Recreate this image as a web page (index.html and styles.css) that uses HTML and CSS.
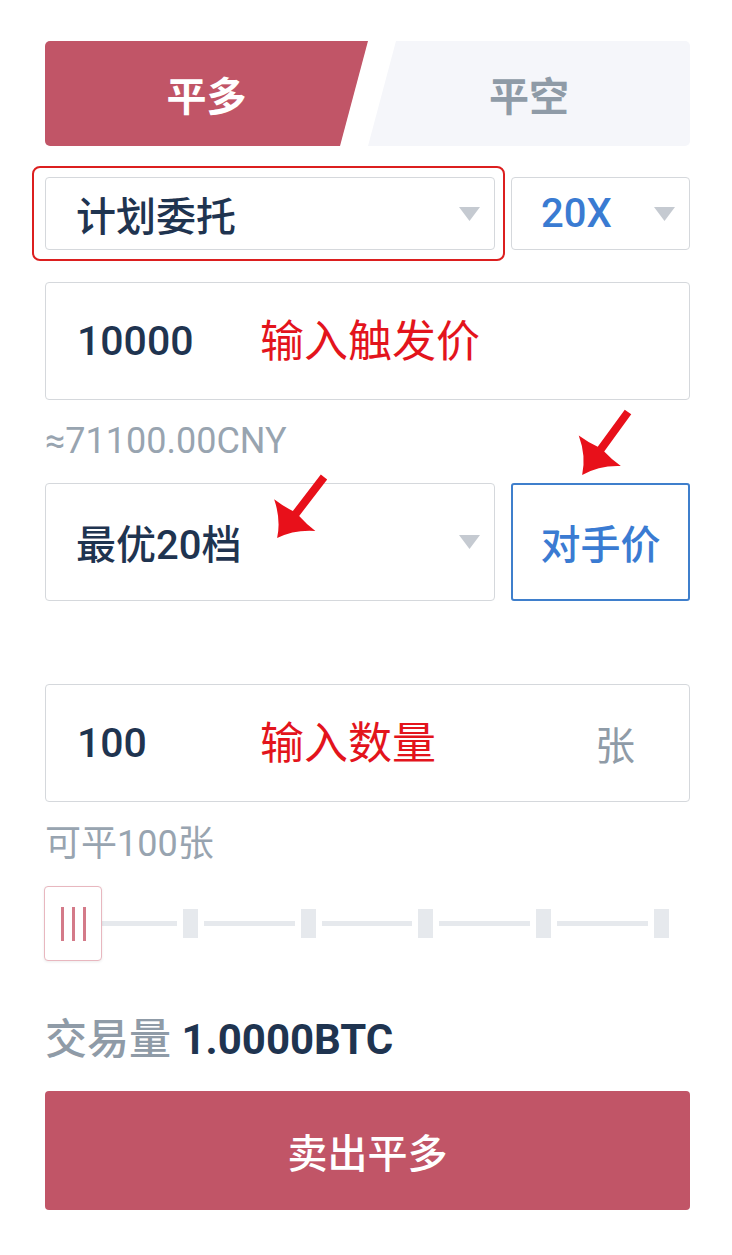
FILE: index.html
```html
<!DOCTYPE html>
<html lang="zh-CN">

<head>
    <meta charset="UTF-8">
    <meta name="viewport" content="width=device-width, initial-scale=1.0">
    <title>平多 - 计划委托</title>
    <link rel="stylesheet" href="styles.css">
</head>

<body>
    <div class="panel">
        <!-- direction tabs -->
        <div class="tabs">
            <div class="tab tab-active">平多</div>
            <div class="tab tab-idle">平空</div>
        </div>

        <div class="row row-type">
            <div class="mark">
                <div class="select">
                    <span>计划委托</span>
                    <svg class="caret" width="21" height="14" viewBox="0 0 21 14"><polygon points="0,0 21,0 10.5,14" /></svg>
                </div>
            </div>
            <div class="select lever">
                <span>20X</span>
                <svg class="caret" width="21" height="14" viewBox="0 0 21 14"><polygon points="0,0 21,0 10.5,14" /></svg>
            </div>
        </div>

        <div class="field">
            <span class="value">10000</span>
            <span class="hint">输入触发价</span>
        </div>
        <div class="approx">≈71100.00CNY</div>

        <div class="row row-price">
            <div class="select tall">
                <span>最优20档</span>
                <svg class="caret" width="21" height="14" viewBox="0 0 21 14"><polygon points="0,0 21,0 10.5,14" /></svg>
            </div>
            <div class="rival">对手价</div>
        </div>

        <div class="field field-qty">
            <span class="value">100</span>
            <span class="hint">输入数量</span>
            <span class="unit">张</span>
        </div>
        <div class="avail">可平100张</div>

        <div class="slider">
            <div class="track">
                <span class="tick"></span><span class="seg"></span>
                <span class="tick"></span><span class="seg"></span>
                <span class="tick"></span><span class="seg"></span>
                <span class="tick"></span><span class="seg"></span>
                <span class="tick"></span><span class="seg"></span>
                <span class="tick"></span>
            </div>
            <div class="thumb"><i></i><i></i><i></i></div>
        </div>

        <div class="volume"><span class="volume-label">交易量</span> <b>1.0000BTC</b></div>

        <div class="submit">卖出平多</div>
    </div>

    <!-- red annotation arrows -->
    <svg class="arrows" width="732" height="620" viewBox="0 0 732 620">
        <path transform="translate(324 477) rotate(127.5)" d="M0,-4 L46,-4 Q48,-14 48,-26 Q60,-8 77,0 Q60,8 48,26 Q48,14 46,4 L0,4 Z" />
        <path transform="translate(628 412) rotate(126)" d="M0,-4 L46,-4 Q48,-14 48,-26 Q60,-8 78,0 Q60,8 48,26 Q48,14 46,4 L0,4 Z" />
    </svg>
</body>

</html>
```

FILE: styles.css
```css
body {
    margin: 0;
    position: relative;
    font-family: Roboto, "Noto Sans CJK SC", sans-serif;
    background-color: #fff;
    color: #1f3450;
}

.panel {
    width: 645px;
    margin-left: 45px;
    padding-top: 41px;
}

.tabs {
    display: flex;
    height: 105px;
}

.tab {
    display: flex;
    align-items: center;
    justify-content: center;
    font-size: 40px;
    font-weight: 700;
}

.tab-active {
    width: 323px;
    background-color: #c15567;
    color: #fff;
    border-radius: 5px 0 0 5px;
    clip-path: polygon(0 0, 100% 0, calc(100% - 28px) 100%, 0 100%);
}

.tab-idle {
    flex: 1;
    background-color: #f5f6fa;
    color: #8f9ba7;
    border-radius: 0 5px 5px 0;
    clip-path: polygon(28px 0, 100% 0, 100% 100%, 0 100%);
}

.row {
    display: flex;
    gap: 16px;
}

.row-type {
    margin-top: 31px;
    gap: 6px;
}

.mark {
    border: 2px solid #dc1f1f;
    border-radius: 8px;
    padding: 9px 8px 9px 11px;
    margin: -11px 0 -11px -13px;
}

.select {
    box-sizing: border-box;
    width: 450px;
    height: 73px;
    display: flex;
    align-items: center;
    justify-content: space-between;
    padding: 0 14px 0 30px;
    border: 1px solid #d5d8dc;
    border-radius: 4px;
    font-size: 40px;
    font-weight: 500;
}

.caret {
    fill: #c5cad1;
}

.lever {
    width: auto;
    flex: 1;
    padding-left: 29px;
    color: #3a7bd2;
}

.field {
    box-sizing: border-box;
    height: 118px;
    margin-top: 32px;
    display: flex;
    align-items: center;
    padding: 0 54px 0 31px;
    border: 1px solid #d5d8dc;
    border-radius: 4px;
}

.value {
    width: 183px;
    font-size: 41px;
    font-weight: 500;
}

.hint {
    margin-top: -6px;
    color: #e3141c;
    font-size: 44px;
}

.unit {
    margin-left: auto;
    color: #8f9ba7;
    font-size: 40px;
}

.approx {
    line-height: 83px;
    font-size: 36px;
    color: #98a4b0;
}

.tall {
    height: 118px;
}

.rival {
    box-sizing: border-box;
    flex: 1;
    display: flex;
    align-items: center;
    justify-content: center;
    border: 2px solid #3f7fcc;
    border-radius: 3px;
    color: #3a7bd2;
    font-size: 40px;
    font-weight: 500;
}

.field-qty {
    margin-top: 83px;
}

.avail {
    line-height: 84px;
    font-size: 36px;
    color: #98a4b0;
}

.slider {
    position: relative;
    height: 75px;
}

.track {
    width: 604px;
    height: 100%;
    margin-left: 20px;
    display: flex;
    align-items: center;
    gap: 6px;
}

.tick {
    width: 15px;
    height: 29px;
    background-color: #e6e9ed;
}

.seg {
    flex: 1;
    height: 5px;
    background-color: #e6e9ed;
}

.thumb {
    position: absolute;
    left: -1px;
    top: 0;
    box-sizing: border-box;
    width: 58px;
    height: 75px;
    display: flex;
    align-items: center;
    justify-content: center;
    gap: 8px;
    background-color: #fff;
    border: 1px solid #e8b7bf;
    border-radius: 4px;
    box-shadow: 0 1px 3px rgba(0, 0, 0, 0.08);
}

.thumb i {
    width: 3px;
    height: 34px;
    background-color: #d47a89;
}

.volume {
    margin-top: 49px;
    line-height: 60px;
    font-size: 42px;
}

.volume-label {
    color: #8f9ba7;
    font-weight: 500;
}

.volume b {
    font-weight: 700;
}

.submit {
    height: 119px;
    margin-top: 21px;
    display: flex;
    align-items: center;
    justify-content: center;
    background-color: #c15567;
    border-radius: 4px;
    color: #fff;
    font-size: 40px;
    font-weight: 500;
}

.arrows {
    position: absolute;
    top: 0;
    left: 0;
    fill: #e8101a;
    pointer-events: none;
}
```
